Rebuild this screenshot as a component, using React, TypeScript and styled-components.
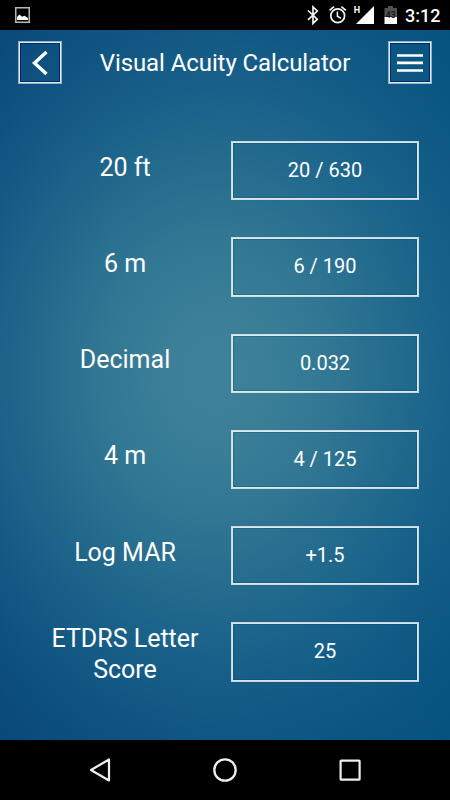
import React from "react";
import styled, { createGlobalStyle } from "styled-components";

const GlobalStyle = createGlobalStyle`
  * { box-sizing: border-box; }
  html, body { margin: 0; padding: 0; background: #000; }
`;

const Screen = styled.div`
  width: 450px;
  height: 800px;
  display: flex;
  flex-direction: column;
  overflow: hidden;
  background: #000;
  color: #fff;
  font-family: Roboto, "Liberation Sans", sans-serif;
`;

const StatusBar = styled.header`
  height: 30px;
  flex: none;
  display: flex;
  align-items: center;
  justify-content: space-between;
  padding: 0 10px 0 15px;
`;

const StatusIcons = styled.div`
  display: flex;
  align-items: center;
`;

const Clock = styled.time`
  width: 35px;
  margin-left: 8px;
  padding-top: 1px;
  font-size: 18px;
  font-weight: 500;
  line-height: 30px;
  white-space: nowrap;
`;

const Panel = styled.main`
  height: 710px;
  flex: none;
  display: flex;
  flex-direction: column;
  background:
    radial-gradient(ellipse 375px 450px at 215px 345px,
      #3d8299 0%,
      rgba(60, 129, 152, 0.97) 15%,
      rgba(54, 124, 150, 0.88) 32%,
      rgba(44, 116, 147, 0.76) 48%,
      rgba(35, 110, 146, 0.58) 63%,
      rgba(28, 104, 143, 0.34) 79%,
      rgba(24, 98, 140, 0.12) 93%,
      rgba(20, 94, 138, 0) 105%),
    linear-gradient(90deg, #084778 0%, #0b4f7d 50%, #06527f 100%);
`;

const TopBar = styled.div`
  height: 66px;
  display: flex;
  align-items: center;
  justify-content: space-between;
  padding: 0 18px 1px;
`;

const IconButton = styled.button`
  width: 44px;
  height: 43px;
  padding: 0;
  display: flex;
  align-items: center;
  justify-content: center;
  border: 1px solid rgba(255, 255, 255, 0.55);
  background: transparent;
  color: #fff;
  box-shadow: inset 0 0 0 1px #e3e9f1, inset 0 0 0 2px rgba(0, 22, 112, 0.7);
`;

const Title = styled.h1`
  margin: 0;
  padding-top: 1px;
  font-size: 24px;
  font-weight: 400;
  letter-spacing: -0.09px;
  line-height: 32px;
  white-space: nowrap;
`;

const Rows = styled.div`
  display: flex;
  flex-direction: column;
  padding: 45.2px 31px 0 35px;
`;

const Row = styled.div`
  height: 96.25px;
  display: grid;
  grid-template-columns: 180px 188px;
  justify-content: space-between;
  align-items: start;
`;

const Label = styled.div<{ $lines: number }>`
  padding-top: ${(p) => (p.$lines > 1 ? 0.9 : 10.5)}px;
  font-size: 25px;
  line-height: 31px;
  text-align: center;
`;

const Value = styled.div`
  height: 59.3px;
  display: flex;
  align-items: center;
  justify-content: center;
  padding-bottom: 1.4px;
  border: 1px solid rgba(255, 255, 255, 0.75);
  box-shadow: inset 0 0 0 1px rgba(255, 255, 255, 0.85), inset 0 0 0 2px rgba(0, 70, 105, 0.3);
  font-size: 20px;
  line-height: 24px;
`;

const NavBar = styled.nav`
  height: 60px;
  flex: none;
  display: flex;
  align-items: center;
  justify-content: center;
  gap: 101px;
`;

const readings = [
  { label: "20 ft", value: "20 / 630", lines: 1 },
  { label: "6 m", value: "6 / 190", lines: 1 },
  { label: "Decimal", value: "0.032", lines: 1 },
  { label: "4 m", value: "4 / 125", lines: 1 },
  { label: "Log MAR", value: "+1.5", lines: 1 },
  { label: "ETDRS Letter Score", value: "25", lines: 2 },
];

const PictureIcon = () => (
  <svg width="15" height="16" viewBox="0 0 15 16">
    <rect x="0.75" y="0.75" width="13.5" height="14.5" fill="none" stroke="#b9b9b3" strokeWidth="1.5" />
    <path d="M2 13V10L4.5 7.6L7 9.7L9.5 8.8L13 11V13Z" fill="#fff" />
  </svg>
);

const SystemIcons = () => (
  <svg width="92" height="30" viewBox="305 0 92 30" fill="none">
    <path d="M308 10.5L317.3 19.2L313 23.4V7L317.3 11L308 19.8" stroke="#f4f4f4" strokeWidth="1.7" />
    <circle cx="337.7" cy="15.7" r="6.9" stroke="#f4f4f4" strokeWidth="1.7" />
    <path d="M337.4 11.5V16.2L341 18.3" stroke="#f4f4f4" strokeWidth="1.5" />
    <path d="M329.5 10.3L334 6.6M341.4 6.6L345.9 10.3" stroke="#f4f4f4" strokeWidth="1.7" />
    <text x="353.8" y="12.7" fill="#fff" fontFamily="Roboto" fontWeight="700" fontSize="9">H</text>
    <path d="M374 6V24H356Z" fill="#fff" />
    <path d="M384.5 17V8H388V6H393V8H397V17Z" fill="#505050" />
    <path d="M384.5 17H397V24H384.5Z" fill="#fff" />
    <text x="390.7" y="18.2" fill="#111" textAnchor="middle" fontFamily="Roboto" fontWeight="500" fontSize="8.5">43</text>
  </svg>
);

export default function App() {
  return (
    <>
      <GlobalStyle />
      <Screen>
        <StatusBar>
          <PictureIcon />
          <StatusIcons>
            <SystemIcons />
            <Clock>3:12</Clock>
          </StatusIcons>
        </StatusBar>
        <Panel>
          <TopBar>
            <IconButton aria-label="Back">
              <svg width="40" height="40" viewBox="20 42.5 40 40" fill="none">
                <path d="M46.5 51.5L34.5 62.5L46.5 73.5" stroke="#fff" strokeWidth="3.4" />
              </svg>
            </IconButton>
            <Title>Visual Acuity Calculator</Title>
            <IconButton aria-label="Menu">
              <svg width="40" height="40" viewBox="390 42.5 40 40">
                <path d="M397 55H423M397 62.4H423M397 70H423" stroke="#fff" strokeWidth="2.6" />
              </svg>
            </IconButton>
          </TopBar>
          <Rows>
            {readings.map((r) => (
              <Row key={r.label}>
                <Label $lines={r.lines}>{r.label}</Label>
                <Value>{r.value}</Value>
              </Row>
            ))}
          </Rows>
        </Panel>
        <NavBar>
          <svg width="24" height="26" viewBox="88 757 24 26" fill="none">
            <path d="M109 759.5V780.5L91 770Z" stroke="#eee" strokeWidth="2.2" strokeLinejoin="round" />
          </svg>
          <svg width="24" height="26" viewBox="213 757 24 26" fill="none">
            <circle cx="225" cy="770" r="10.7" stroke="#eee" strokeWidth="2.3" />
          </svg>
          <svg width="24" height="26" viewBox="338 757 24 26" fill="none">
            <rect x="340.6" y="760.6" width="19" height="19" rx="0.5" stroke="#eee" strokeWidth="2.2" />
          </svg>
        </NavBar>
      </Screen>
    </>
  );
}
